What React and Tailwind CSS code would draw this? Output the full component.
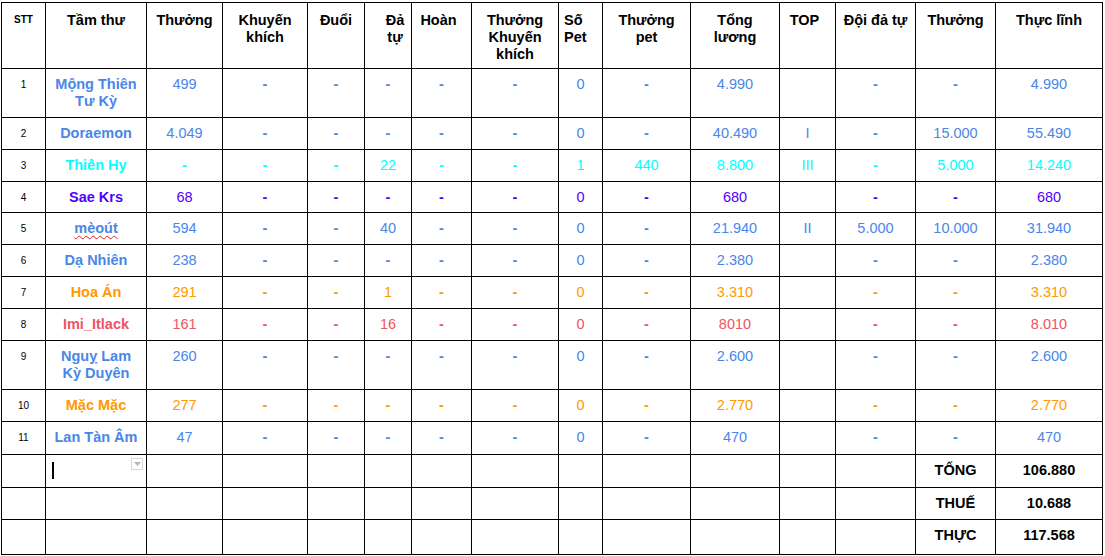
const widths = [44, 101, 76, 85, 57, 47, 60, 87, 44, 88, 89, 56, 80, 80, 107];

const headers = [
  { t: ["Tầm thư"] },
  { t: ["Thưởng"] },
  { t: ["Khuyến", "khích"] },
  { t: ["Đuổi"] },
  { t: ["Đả", "tự"], cls: "pl-[18px]" },
  { t: ["Hoàn"], cls: "pr-[10px]" },
  { t: ["Thưởng", "Khuyến", "khích"] },
  { t: ["Số", "Pet"], cls: "text-left pl-[5px]" },
  { t: ["Thưởng", "pet"] },
  { t: ["Tổng", "lương"] },
  { t: ["TOP"], cls: "pr-[10px]" },
  { t: ["Đội đả tự"] },
  { t: ["Thưởng"] },
  { t: ["Thực lĩnh"] },
];

const BLUE = "text-[#4a86e8]";
const CYAN = "text-[#00ffff]";
const PURPLE = "text-[#5200ff]";
const ORANGE = "text-[#ff9900]";
const RED = "text-[#ec5563]";

const rows = [
  { stt: 1, name: ["Mộng Thiên", "Tư Kỳ"], color: BLUE, h: "h-[49px]", v: ["499", "-", "-", "-", "-", "-", "0", "-", "4.990", "", "-", "-", "4.990"] },
  { stt: 2, name: ["Doraemon"], color: BLUE, h: "h-[32px]", v: ["4.049", "-", "-", "-", "-", "-", "0", "-", "40.490", "I", "-", "15.000", "55.490"] },
  { stt: 3, name: ["Thiên Hy"], color: CYAN, h: "h-[32px]", v: ["-", "-", "-", "22", "-", "-", "1", "440", "8.800", "III", "-", "5.000", "14.240"] },
  { stt: 4, name: ["Sae Krs"], color: PURPLE, h: "h-[31px]", v: ["68", "-", "-", "-", "-", "-", "0", "-", "680", "", "-", "-", "680"] },
  { stt: 5, name: ["mèoút"], color: BLUE, h: "h-[32px]", squiggle: true, v: ["594", "-", "-", "40", "-", "-", "0", "-", "21.940", "II", "5.000", "10.000", "31.940"] },
  { stt: 6, name: ["Dạ Nhiên"], color: BLUE, h: "h-[32px]", v: ["238", "-", "-", "-", "-", "-", "0", "-", "2.380", "", "-", "-", "2.380"] },
  { stt: 7, name: ["Hoa Án"], color: ORANGE, h: "h-[32px]", v: ["291", "-", "-", "1", "-", "-", "0", "-", "3.310", "", "-", "-", "3.310"] },
  { stt: 8, name: ["Imi_Itlack"], color: RED, h: "h-[32px]", v: ["161", "-", "-", "16", "-", "-", "0", "-", "8010", "", "-", "-", "8.010"] },
  { stt: 9, name: ["Nguỵ Lam", "Kỳ Duyên"], color: BLUE, h: "h-[49px]", v: ["260", "-", "-", "-", "-", "-", "0", "-", "2.600", "", "-", "-", "2.600"] },
  { stt: 10, name: ["Mặc Mặc"], color: ORANGE, h: "h-[32px]", v: ["277", "-", "-", "-", "-", "-", "0", "-", "2.770", "", "-", "-", "2.770"] },
  { stt: 11, name: ["Lan Tàn Âm"], color: BLUE, h: "h-[33px]", v: ["47", "-", "-", "-", "-", "-", "0", "-", "470", "", "-", "-", "470"] },
];

const totals = [
  { label: "TỔNG", value: "106.880", h: "h-[33px]" },
  { label: "THUẾ", value: "10.688", h: "h-[32px]" },
  { label: "THỰC", value: "117.568", h: "h-[35px]" },
];

const cell = "border border-black align-top text-center px-[4px] pt-[7px] leading-[17px]";

function Lines({ t }) {
  return t.map((line, i) => (
    <span key={i}>
      {i > 0 && <br />}
      {line}
    </span>
  ));
}

export default function App() {
  return (
    <div className="bg-white w-[1105px] h-[556px] pt-[2px] pl-[1px] font-['Liberation_Sans',Arial,sans-serif] text-[14.5px] text-black">
      <table className="table-fixed border-collapse w-[1101px]">
        <colgroup>
          {widths.map((w, i) => (
            <col key={i} style={{ width: w }} />
          ))}
        </colgroup>
        <thead>
          <tr className="h-[66px]">
            <th className={`${cell} text-[10px] font-bold pt-[8px]`}>STT</th>
            {headers.map((h, i) => (
              <th key={i} className={`${cell} font-bold pt-[9px] ${h.cls || ""}`}>
                <Lines t={h.t} />
              </th>
            ))}
          </tr>
        </thead>
        <tbody>
          {rows.map((r) => (
            <tr key={r.stt} className={r.h}>
              <td className={`${cell} text-[10px] pt-[7px]`}>{r.stt}</td>
              <td className={`${cell} font-bold ${r.color}`}>
                {r.squiggle ? (
                  <span className="underline decoration-wavy decoration-[#e02020] decoration-1 underline-offset-2">
                    {r.name[0]}
                  </span>
                ) : (
                  <Lines t={r.name} />
                )}
              </td>
              {r.v.map((v, i) => (
                <td key={i} className={`${cell} ${r.color} ${v === "-" ? "font-bold" : ""}`}>
                  {v}
                </td>
              ))}
            </tr>
          ))}
          {totals.map((t, ri) => (
            <tr key={t.label} className={t.h}>
              <td className={cell}></td>
              <td className={`${cell} relative`}>
                {ri === 0 && (
                  <>
                    <span className="absolute left-[6px] top-[7px] w-[2px] h-[17px] bg-black" />
                    <span className="absolute right-[3px] top-[3px] w-[12px] h-[12px] border border-[#d9d9d9] bg-white flex items-center justify-center">
                      <svg width="7" height="4" viewBox="0 0 7 4">
                        <path d="M0 0h7L3.5 4z" fill="#b5b5b5" />
                      </svg>
                    </span>
                  </>
                )}
              </td>
              {Array.from({ length: 11 }).map((_, i) => (
                <td key={i} className={cell}></td>
              ))}
              <td className={`${cell} font-bold`}>{t.label}</td>
              <td className={`${cell} font-bold`}>{t.value}</td>
            </tr>
          ))}
        </tbody>
      </table>
    </div>
  );
}
